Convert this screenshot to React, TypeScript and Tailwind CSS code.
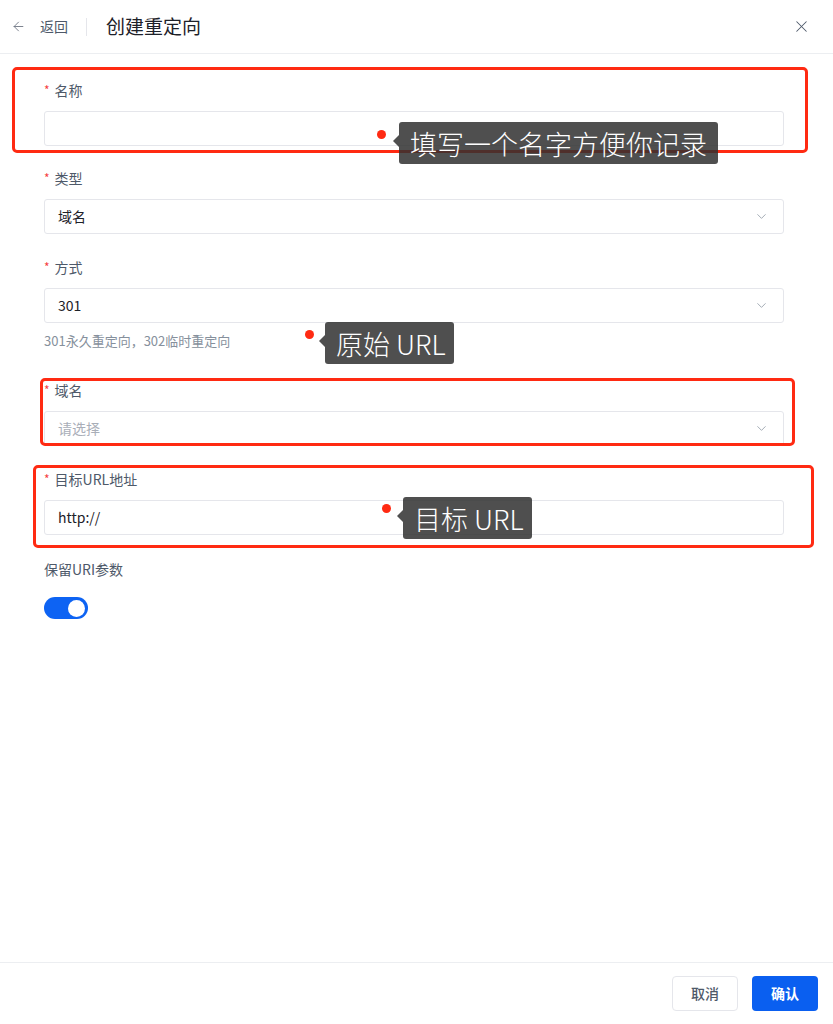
import React from "react";
import { ArrowLeft, X, ChevronDown } from "lucide-react";

const font = { fontFamily: '"Noto Sans CJK SC", "Noto Sans", sans-serif' };

function Label({ text, required = true }: { text: string; required?: boolean }) {
  return (
    <div className="flex items-center h-[22px] text-[14px] text-[#4e5969]">
      {required && <span className="text-[#f53f3f] text-[12px] mr-[5px] leading-none">*</span>}
      <span>{text}</span>
    </div>
  );
}

function Field({ value, placeholder, select }: { value?: string; placeholder?: string; select?: boolean }) {
  return (
    <div className="mt-[10px] h-[35px] border border-[#e5e6eb] rounded-[3px] flex items-center justify-between px-[13px] text-[14px]">
      <span className={value ? "text-[#1d2129]" : "text-[#a9aeb8]"}>{value || placeholder || ""}</span>
      {select && <ChevronDown size={15} strokeWidth={1.2} className="text-[#86909c] mr-[1px]" />}
    </div>
  );
}

function Note({ left, top, width, text, dotLeft, dotTop }: { left: number; top: number; width: number; text: string; dotLeft: number; dotTop: number }) {
  return (
    <>
      <div className="absolute w-[9px] h-[9px] rounded-full bg-[#ff2a12]" style={{ left: dotLeft - 4, top: dotTop - 4 }} />
      <div
        className="absolute h-[42px] rounded-[3px] bg-[rgba(48,48,48,0.85)] text-white text-[27px] font-light flex items-center px-[11px] leading-none whitespace-nowrap"
        style={{ left, top, width }}
      >
        <div className="absolute left-[-6px] top-[13px] w-0 h-0 border-y-[6px] border-y-transparent border-r-[6px] border-r-[rgba(48,48,48,0.85)]" />
        {text}
      </div>
    </>
  );
}

function RedBox({ left, top, width, height }: { left: number; top: number; width: number; height: number }) {
  return (
    <div
      className="absolute border-[3px] border-[#ff2a12] rounded-[5px] pointer-events-none"
      style={{ left, top, width, height }}
    />
  );
}

export default function App() {
  return (
    <div className="relative w-full h-[1024px] bg-white flex flex-col overflow-hidden" style={font}>
      <div className="h-[54px] shrink-0 border-b border-[#eceef1] flex items-center pl-[11px] pr-[22px]">
        <ArrowLeft size={15} strokeWidth={1.4} className="text-[#6b7280]" />
        <span className="ml-[14px] text-[14px] text-[#4e5969]">返回</span>
        <div className="ml-[18px] w-px h-[18px] bg-[#e5e6eb]" />
        <span className="ml-[19px] text-[19px] text-[#1d2129]">创建重定向</span>
        <X size={19} strokeWidth={1.3} className="ml-auto text-[#4e5969]" />
      </div>

      <div className="flex-1 pl-[44px] pr-[49px] pt-[25px]">
        <Label text="名称" />
        <Field />
        <div className="mt-[21px]" />
        <Label text="类型" />
        <Field value="域名" select />
        <div className="mt-[22px]" />
        <Label text="方式" />
        <Field value="301" select />
        <div className="mt-[10px] text-[13px] text-[#86909c] leading-[16px]">301永久重定向，302临时重定向</div>
        <div className="mt-[30px]" />
        <Label text="域名" />
        <Field placeholder="请选择" select />
        <div className="mt-[22px]" />
        <Label text="目标URL地址" />
        <Field value="http://" />
        <div className="mt-[23px]" />
        <Label text="保留URI参数" required={false} />
        <div className="mt-[17px] w-[44px] h-[22px] rounded-full bg-[#0d63f3] flex items-center justify-end pr-[3px]">
          <div className="w-[17px] h-[17px] rounded-full bg-white" />
        </div>
      </div>

      <div className="h-[62px] shrink-0 border-t border-[#eceef1] flex items-center justify-end pr-[15px] gap-[14px]">
        <button className="w-[66px] h-[35px] rounded-[4px] border border-[#e5e6eb] bg-white text-[14px] text-[#4e5969] font-medium">取消</button>
        <button className="w-[66px] h-[35px] rounded-[4px] bg-[#0a5ff0] text-[14px] text-white font-semibold">确认</button>
      </div>

      <RedBox left={12} top={67} width={796} height={86} />
      <RedBox left={40} top={378} width={755} height={68} />
      <RedBox left={33} top={465} width={781} height={83} />

      <Note left={399} top={122} width={319} text="填写一个名字方便你记录" dotLeft={381} dotTop={134} />
      <Note left={325} top={322} width={129} text="原始 URL" dotLeft={309} dotTop={334} />
      <Note left={403} top={497} width={129} text="目标 URL" dotLeft={386} dotTop={508} />
    </div>
  );
}
